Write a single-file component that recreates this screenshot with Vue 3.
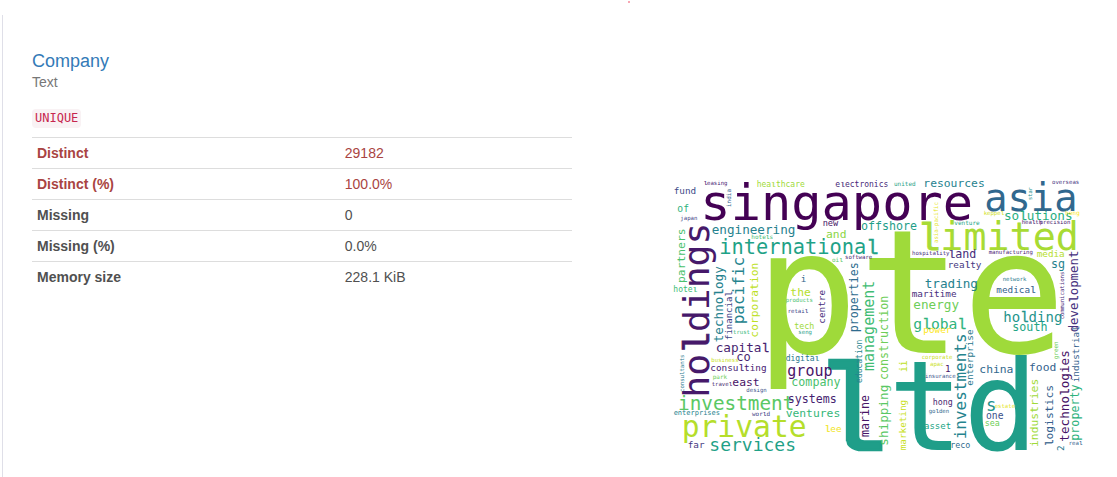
<script setup>
const stats = [
  { label: 'Distinct', value: '29182', alert: true },
  { label: 'Distinct (%)', value: '100.0%', alert: true },
  { label: 'Missing', value: '0' },
  { label: 'Missing (%)', value: '0.0%' },
  { label: 'Memory size', value: '228.1 KiB' },
]

// Horizontal words: text, start x, baseline y, size, colour
const across = [
  ['pte', 269, 534, 517, '#9fda3a'],
  ['ltd', 445, 824, 374, '#1f9e89'],
  ['singapore', 106, 134, 151, '#440154'],
  ['asia', 958, 108, 116, '#31688e'],
  ['limited', 757, 224, 115, '#a8db34'],
  ['private', 50, 785, 89, '#b5de2b'],
  ['international', 163, 237, 61, '#1fa287'],
  ['investment', 39, 704, 58, '#5ac864'],
  ['services', 133, 829, 54, '#1fa187'],
  ['leasing', 116, 31, 17, '#482071'],
  ['fund', 26, 56, 28, '#3e4a89'],
  ['healthcare', 275, 36, 24, '#9fda3a'],
  ['of', 37, 110, 29, '#2db27d'],
  ['japan', 46, 135, 17, '#433e85'],
  ['hotel', 25, 350, 24, '#3dbc74'],
  ['engineering', 140, 176, 38, '#26828e'],
  ['hotels', 259, 193, 18, '#3fbc73'],
  ['electronics', 511, 37, 24, '#482878'],
  ['united', 687, 33, 18, '#1fa187'],
  ['resources', 775, 37, 34, '#26828e'],
  ['overseas', 1161, 28, 17, '#46327e'],
  ['keppel', 956, 120, 17, '#d0e11c'],
  ['solutions', 1017, 134, 38, '#28ae80'],
  ['heng', 1201, 120, 18, '#fde725'],
  ['venture', 868, 151, 18, '#21a585'],
  ['health', 1070, 147, 17, '#481c6e'],
  ['precision', 1124, 147, 17, '#481c6e'],
  ['new', 473, 154, 26, '#481467'],
  ['offshore', 588, 164, 35, '#1f9e89'],
  ['and', 483, 189, 34, '#8bd646'],
  ['hospitality', 741, 241, 17, '#472f7d'],
  ['oil', 501, 260, 18, '#5ac864'],
  ['software', 540, 253, 17, '#481b6d'],
  ['land', 850, 250, 35, '#472d7b'],
  ['realty', 848, 279, 28, '#453781'],
  ['manufacturing', 971, 238, 17, '#482173'],
  ['media', 1115, 246, 28, '#b5de2b'],
  ['sg', 1158, 279, 35, '#26828e'],
  ['trading', 779, 340, 38, '#26828e'],
  ['maritime', 740, 366, 28, '#472d7b'],
  ['energy', 745, 402, 38, '#6ece58'],
  ['global', 745, 461, 44, '#2eb37c'],
  ['power', 775, 474, 28, '#fde725'],
  ['medical', 994, 353, 28, '#355f8d'],
  ['network', 1013, 317, 17, '#2a788e'],
  ['holding', 1015, 442, 42, '#1f948c'],
  ['south', 1042, 468, 35, '#21a585'],
  ['trust', 204, 478, 17, '#35b779'],
  ['capital', 152, 530, 38, '#481f70'],
  ['i', 407, 320, 28, '#31688e'],
  ['the', 376, 363, 34, '#b5de2b'],
  ['products', 362, 382, 17, '#4ac16d'],
  ['retail', 368, 415, 17, '#414487'],
  ['tech', 388, 461, 25, '#a0da39'],
  ['seng', 400, 476, 17, '#1f9e89'],
  ['digital', 362, 559, 24, '#2a788e'],
  ['corporate', 770, 552, 17, '#c8e020'],
  ['apac', 795, 572, 17, '#c8e020'],
  ['1', 840, 590, 28, '#481467'],
  ['insurance', 780, 608, 17, '#3b528b'],
  ['hong', 803, 691, 25, '#481f70'],
  ['golden', 791, 715, 17, '#31688e'],
  ['asset', 777, 763, 27, '#21a585'],
  ['china', 943, 593, 34, '#31688e'],
  ['food', 1092, 588, 34, '#34618d'],
  ['s', 963, 708, 52, '#21918c'],
  ['estate', 989, 700, 17, '#e5e419'],
  ['one', 963, 731, 29, '#3b528b'],
  ['sea', 959, 752, 25, '#6ece58'],
  ['real', 1211, 809, 17, '#34618d'],
  ['reco', 856, 820, 25, '#2f6c8e'],
  ['co', 214, 559, 36, '#481f70'],
  ['business', 139, 560, 17, '#c8e020'],
  ['consulting', 136, 588, 28, '#482173'],
  ['park', 143, 613, 18, '#6ece58'],
  ['travel', 140, 633, 17, '#481f70'],
  ['east', 202, 632, 34, '#481467'],
  ['design', 244, 650, 17, '#3b528b'],
  ['group', 367, 603, 45, '#481467'],
  ['company', 379, 632, 35, '#4ac16d'],
  ['systems', 368, 683, 35, '#481f70'],
  ['enterprises', 26, 720, 21, '#26828e'],
  ['world', 261, 724, 18, '#433e85'],
  ['ventures', 362, 726, 34, '#35b779'],
  ['lee', 479, 772, 28, '#f1e51d'],
  ['far', 68, 818, 28, '#453781'],
]

// Words that read upwards: text, baseline x, start y, size, colour
const upward = [
  ['holdings', 132, 668, 109, '#46196a'],
  ['india', 199, 96, 18, '#34618d'],
  ['partners', 60, 324, 34, '#4ac16d'],
  ['star', 1101, 75, 16, '#21918c'],
  ['asia-pacific', 819, 204, 17, '#e5e419'],
  ['development', 1240, 472, 37, '#46327e'],
  ['communications', 1197, 433, 17, '#482878'],
  ['industrial', 1243, 622, 28, '#34618d'],
  ['green', 1180, 553, 18, '#6ece58'],
  ['technologies', 1211, 800, 38, '#481467'],
  ['technology', 173, 502, 38, '#26828e'],
  ['financial', 201, 495, 27, '#414487'],
  ['pacific', 238, 448, 48, '#25848e'],
  ['corporation', 279, 488, 34, '#bddf26'],
  ['centre', 480, 446, 28, '#472d7b'],
  ['properties', 578, 472, 35, '#2f6c8e'],
  ['management', 628, 588, 45, '#3fbc73'],
  ['construction', 670, 615, 35, '#6ece58'],
  ['education', 592, 624, 24, '#25848e'],
  ['shipping', 670, 812, 38, '#5ac864'],
  ['marine', 612, 786, 35, '#481467'],
  ['marketing', 723, 826, 28, '#c8e020'],
  ['ii', 725, 591, 29, '#bddf26'],
  ['investments', 902, 793, 48, '#25848e'],
  ['enterprise', 924, 632, 28, '#2a788e'],
  ['industries', 1119, 816, 34, '#a0da39'],
  ['logistics', 1165, 814, 34, '#355f8d'],
  ['2', 1197, 828, 28, '#2a788e'],
  ['property', 1242, 797, 35, '#2db27d'],
  ['consultants', 57, 651, 17, '#2a788e'],
]

// Separates each "l" so that it can be set with a flat foot
const runs = (word) => word.split(/(l)/).filter(Boolean)
</script>

<template>
  <main class="page">
    <span class="marker"></span>
    <section class="variable">
      <div class="summary">
        <h4 class="name"><a href="#company">Company</a></h4>
        <p class="kind">Text</p>
        <div class="tags"><code>UNIQUE</code></div>
        <table class="stats">
          <tbody>
            <tr v-for="row in stats" :key="row.label" :class="{ alert: row.alert }">
              <th scope="row">{{ row.label }}</th>
              <td>{{ row.value }}</td>
            </tr>
          </tbody>
        </table>
      </div>
      <svg class="cloud" viewBox="0 0 1272 840" role="img" aria-label="Word cloud of company names">
        <text
          v-for="w in across"
          :key="w[0]"
          :x="w[1]"
          :y="w[2]"
          :font-size="w[3]"
          :fill="w[4]"
          :stroke="w[4]"
        ><tspan v-for="(run, i) in runs(w[0])" :key="i" :class="{ flat: run === 'l' }">{{ run }}</tspan></text>
        <text
          v-for="w in upward"
          :key="w[0]"
          :transform="`translate(${w[1]} ${w[2]}) rotate(-90)`"
          :font-size="w[3]"
          :fill="w[4]"
          :stroke="w[4]"
        ><tspan v-for="(run, i) in runs(w[0])" :key="i" :class="{ flat: run === 'l' }">{{ run }}</tspan></text>
      </svg>
    </section>
  </main>
</template>

<style>
body {
  margin: 0;
  background: #fff;
}
</style>

<style scoped>
.page {
  position: relative;
  display: flex;
  min-height: 100vh;
  box-sizing: border-box;
  padding: 15px 0 0 2px;
  font-family: "Liberation Sans", Arial, sans-serif;
  font-size: 14px;
  line-height: 20px;
  color: #505050;
}
.marker {
  position: absolute;
  top: 1px;
  left: 628px;
  width: 2px;
  height: 2px;
  background: #f7a8b4;
}
.variable {
  flex: 1;
  display: grid;
  grid-template-columns: 540fr 424fr;
  column-gap: 93px;
  align-items: start;
  padding: 0 28px 0 29px;
  border-left: 1px solid #dfdfe8;
}
.summary {
  padding-top: 36px;
}
.name {
  margin: 0;
  font-size: 18px;
  font-weight: 400;
  line-height: 20px;
}
.name a {
  color: #337ab7;
  text-decoration: none;
}
.kind {
  margin: 1px 0 0;
  color: #777;
}
.tags {
  margin: 15px 0 10px;
  height: 20px;
  line-height: 20px;
}
code {
  display: inline-block;
  padding: 0 3px;
  border-radius: 4px;
  background: #f9f2f4;
  color: #c7254e;
  font-family: "DejaVu Sans Mono", monospace;
  font-size: 12px;
  line-height: 19px;
}
.stats {
  width: 100%;
  border-collapse: collapse;
  table-layout: fixed;
}
.stats th,
.stats td {
  padding: 5px;
  border-top: 1px solid #ddd;
  text-align: left;
}
.stats th {
  width: 57%;
  box-sizing: border-box;
}
.alert {
  color: #a94442;
}
.cloud {
  display: block;
  width: 100%;
  margin-top: 160px;
  overflow: visible;
  font-family: "DejaVu Sans Mono", monospace;
  stroke-width: 0;
}
.flat {
  font-family: "Liberation Mono", monospace;
  stroke-width: 0.02em;
}
</style>
